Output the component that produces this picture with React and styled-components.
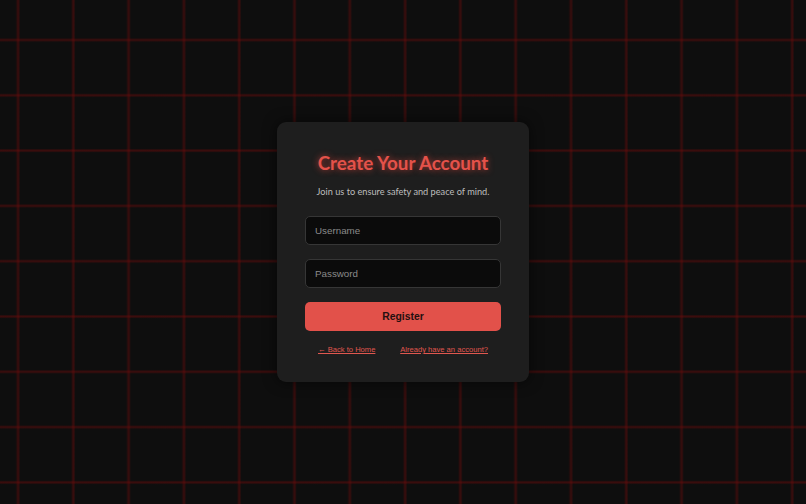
import React from "react";
import styled, { createGlobalStyle } from "styled-components";

const Global = createGlobalStyle`
  html, body { margin: 0; padding: 0; height: 100%; }
  body { background: #0d0d0d; }
  #root { height: 100%; }
  * { box-sizing: border-box; }
`;

const Page = styled.div`
  width: 100%;
  height: 504px;
  display: flex;
  align-items: center;
  justify-content: center;
  background-color: #0e0e0e;
  background-image:
    linear-gradient(to right, transparent 16px, rgba(110, 10, 10, 0.2) 16.5px, rgba(110, 12, 12, 0.48) 18px, rgba(110, 10, 10, 0.2) 19.5px, transparent 20px),
    linear-gradient(to bottom, transparent 38px, rgba(110, 10, 10, 0.2) 38.5px, rgba(110, 12, 12, 0.48) 40px, rgba(110, 10, 10, 0.2) 41.5px, transparent 42px);
  background-size: 55.3px 55.3px;
  background-position: 0 0;
  font-family: "Liberation Sans", Arial, sans-serif;
`;

const Card = styled.div`
  width: 252px;
  padding: 28px 28px 27px;
  background: #1e1e1e;
  border-radius: 9px;
  box-shadow: 0 0 14px rgba(0, 0, 0, 0.6);
  display: flex;
  flex-direction: column;
  align-items: stretch;
`;

const Title = styled.h1`
  margin: 0;
  text-align: center;
  font-family: Lato, "Noto Sans", sans-serif;
  font-weight: 700;
  font-size: 18.8px;
  line-height: 26px;
  color: #e4524a;
  text-shadow: 0 0 6px rgba(228, 70, 60, 0.75);
`;

const Subtitle = styled.p`
  margin: 8px 0 0;
  text-align: center;
  font-family: Lato, "Noto Sans", sans-serif;
  font-size: 9.2px;
  line-height: 16px;
  color: #bdbdbd;
`;

const Form = styled.form`
  display: flex;
  flex-direction: column;
  gap: 14px;
  margin-top: 16px;
`;

const Input = styled.input`
  height: 29px;
  width: 100%;
  padding: 0 9px;
  background: #0b0b0b;
  border: 1px solid #363636;
  border-radius: 5px;
  color: #ddd;
  font-family: "Liberation Sans", Arial, sans-serif;
  font-size: 9.8px;
  outline: none;
  &::placeholder { color: #8a8a8a; }
`;

const Button = styled.button`
  height: 29px;
  width: 100%;
  border: none;
  border-radius: 5px;
  background: #e2514a;
  color: #241010;
  font-family: "Liberation Sans", Arial, sans-serif;
  font-weight: 700;
  font-size: 10.4px;
  cursor: pointer;
`;

const Links = styled.div`
  display: flex;
  justify-content: space-between;
  padding: 0 13px;
  margin-top: 14px;
`;

const Link = styled.a`
  color: #e0574f;
  font-family: "Liberation Sans", Arial, sans-serif;
  font-size: 7.6px;
  text-decoration: underline;
  line-height: 10px;
`;

export default function App() {
  return (
    <>
      <Global />
      <Page>
        <Card>
          <Title>Create Your Account</Title>
          <Subtitle>Join us to ensure safety and peace of mind.</Subtitle>
          <Form onSubmit={(e) => e.preventDefault()}>
            <Input type="text" placeholder="Username" />
            <Input type="password" placeholder="Password" />
            <Button type="submit">Register</Button>
          </Form>
          <Links>
            <Link href="#">← Back to Home</Link>
            <Link href="#">Already have an account?</Link>
          </Links>
        </Card>
      </Page>
    </>
  );
}
